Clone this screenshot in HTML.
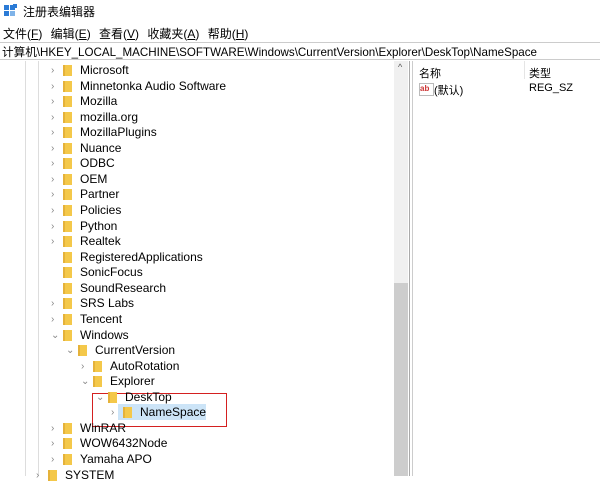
<!DOCTYPE html><html><head><style>
body{margin:0;width:600px;height:476px;overflow:hidden;background:#fff;font-family:"Liberation Sans","Noto Sans CJK SC",sans-serif;position:relative;color:#000}
.a{position:absolute;white-space:nowrap}
.r{position:absolute;height:15px;font-size:12px;line-height:15px;white-space:nowrap}
.f{position:absolute;width:7px;height:11px;background:#f4c84a;top:2px;border-left:2px solid #e5b23a}
.c{position:absolute;color:#888;font-size:10px;top:0}
</style></head><body>
<svg class="a" style="left:4px;top:4px" width="13" height="13"><rect x="0" y="1" width="5" height="5" fill="#2b7bd6"/><rect x="6" y="1" width="5" height="5" fill="#2b7bd6"/><rect x="0" y="7" width="5" height="5" fill="#2b7bd6"/><rect x="6" y="7" width="5" height="5" fill="#7fb3e8"/><rect x="9" y="0" width="4" height="4" fill="#2b7bd6"/></svg>
<div class="a" style="left:23px;top:3px;font-size:12px">注册表编辑器</div>
<div class="a" style="left:3px;top:25px;font-size:12px;word-spacing:5px">文件(<u>F</u>) 编辑(<u>E</u>) 查看(<u>V</u>) 收藏夹(<u>A</u>) 帮助(<u>H</u>)</div>
<div class="a" style="left:0;top:42px;width:600px;height:18px;border-top:1px solid #ccc;border-bottom:1px solid #ccc;box-sizing:border-box"></div>
<div class="a" style="left:2px;top:44px;font-size:11.6px">计算机\HKEY_LOCAL_MACHINE\SOFTWARE\Windows\CurrentVersion\Explorer\DeskTop\NameSpace</div>
<div class="a" style="left:25px;top:61px;width:1px;height:415px;background:#ddd"></div>
<div class="a" style="left:38px;top:61px;width:1px;height:415px;background:#ddd"></div>
<div class="a" style="left:394px;top:61px;width:14px;height:415px;background:#f0f0f0"></div>
<div class="a" style="left:394px;top:283px;width:14px;height:193px;background:#cdcdcd"></div>
<div class="a" style="left:398px;top:62px;font-size:9px;color:#555">^</div>
<div class="a" style="left:409px;top:61px;width:1px;height:415px;background:#aaa"></div>
<div class="a" style="left:412px;top:61px;width:1px;height:415px;background:#ccc"></div>
<div class="a" style="left:419px;top:65px;font-size:11px">名称</div>
<div class="a" style="left:524px;top:61px;width:1px;height:18px;background:#e5e5e5"></div>
<div class="a" style="left:529px;top:65px;font-size:11px">类型</div>
<div class="a" style="left:419px;top:83px;width:13px;height:11px;background:#fff;border:1px solid #bbb;font-size:8px;color:#c33;font-weight:bold;line-height:10px">ab</div>
<div class="a" style="left:434px;top:82px;font-size:11px">(默认)</div>
<div class="a" style="left:529px;top:82px;font-size:11px">REG_SZ</div>
<div class="a" style="left:118px;top:404px;width:88px;height:16px;background:#cce4f7"></div>
<div class="a" style="left:92px;top:393px;width:135px;height:34px;border:1.5px solid #d42020;box-sizing:border-box"></div>
<div id="t"></div>
<script>
var rows=[["Microsoft",1,">"],["Minnetonka Audio Software",1,">"],["Mozilla",1,">"],["mozilla.org",1,">"],["MozillaPlugins",1,">"],["Nuance",1,">"],["ODBC",1,">"],["OEM",1,">"],["Partner",1,">"],["Policies",1,">"],["Python",1,">"],["Realtek",1,">"],["RegisteredApplications",1,""],["SonicFocus",1,""],["SoundResearch",1,""],["SRS Labs",1,">"],["Tencent",1,">"],["Windows",1,"v"],["CurrentVersion",2,"v"],["AutoRotation",3,">"],["Explorer",3,"v"],["DeskTop",4,"v"],["NameSpace",5,">"],["WinRAR",1,">"],["WOW6432Node",1,">"],["Yamaha APO",1,">"],["SYSTEM",0,">"]];
var h="";rows.forEach(function(r,i){var y=63+i*15.56,x=80+(r[1]-1)*15;
h+='<div class="r" style="top:'+y+'px;left:'+(x-30)+'px">'+(r[2]?'<span class="c" style="left:1px">'+(r[2]=="v"?"&#8964;":"&#8250;")+'</span>':'')+'<span class="f" style="left:13px"></span><span style="position:absolute;left:30px">'+r[0]+'</span></div>';});
document.getElementById("t").innerHTML=h;
</script>
</body></html>
